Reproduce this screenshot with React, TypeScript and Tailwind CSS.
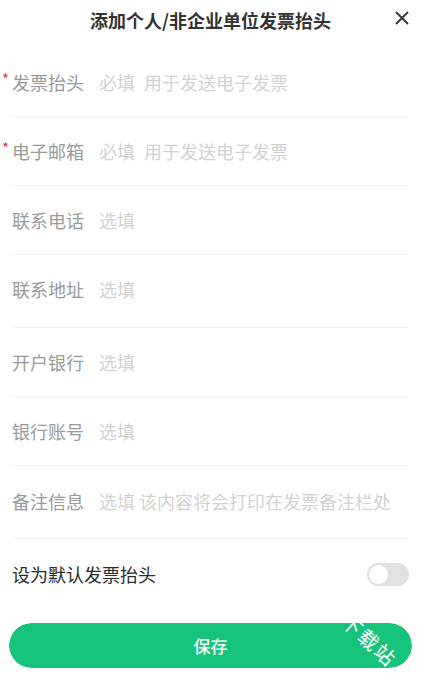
import React from 'react';

const fields = [
    { label: '发票抬头', placeholder: '必填\u2002用于发送电子发票', required: true },
    { label: '电子邮箱', placeholder: '必填\u2002用于发送电子发票', required: true },
    { label: '联系电话', placeholder: '选填' },
    { label: '联系地址', placeholder: '选填', tall: true },
    { label: '开户银行', placeholder: '选填' },
    { label: '银行账号', placeholder: '选填' },
];

function Row({ label, placeholder, required, tall }: { label: string; placeholder: string; required?: boolean; tall?: boolean }) {
    return (
        <div className={`${tall ? 'h-[73px] pb-[4px]' : 'h-[69px]'} flex items-center border-b border-[#f1f1f1]`}>
            <div className="relative w-[87px] shrink-0 text-[18px] leading-[26px] text-[#9a9a9a]">
                {required && (
                    <span className="absolute -left-[10px] -top-[3px] text-[15px] text-[#f5323c]">*</span>
                )}
                {label}
            </div>
            <div className="text-[18px] leading-[26px] text-[#d2d2d2] whitespace-nowrap">{placeholder}</div>
        </div>
    );
}

export default function App() {
    return (
        <div
            className="w-[421px] h-[680px] bg-white px-3 overflow-hidden"
            style={{ fontFamily: '"Noto Sans CJK SC", "Noto Sans", sans-serif' }}
        >
            {/* Header */}
            <div className="relative h-[40px] flex items-center justify-center">
                <h1 className="text-[18px] font-bold text-[#333]">添加个人/非企业单位发票抬头</h1>
                <svg
                    className="absolute right-[0px] top-[11px]"
                    width="14"
                    height="14"
                    viewBox="0 0 14 14"
                    fill="none"
                    stroke="#3a3a3a"
                    strokeWidth="2"
                >
                    <path d="M1 1 L13 13 M13 1 L1 13" />
                </svg>
            </div>

            {/* Form */}
            <div className="mt-2">
                {fields.map((f) => (
                    <Row key={f.label} {...f} />
                ))}
                <div className="h-[73px] flex items-start pt-[22px] border-b border-[#f1f1f1]">
                    <div className="w-[87px] shrink-0 text-[18px] leading-[26px] text-[#9a9a9a]">备注信息</div>
                    <div className="text-[18px] leading-[26px] text-[#d2d2d2] whitespace-nowrap">
                        选填 该内容将会打印在发票备注栏处
                    </div>
                </div>
                <div className="h-[70px] flex items-center justify-between">
                    <span className="text-[18px] leading-[26px] text-[#2b2b2b]">设为默认发票抬头</span>
                    <div className="w-[42px] h-[23px] rounded-full bg-[#e1e1e1] p-[2px] flex items-center">
                        <div className="w-[19px] h-[19px] rounded-full bg-white" />
                    </div>
                </div>
            </div>

            {/* Save button */}
            <div className="relative mt-[14px] -mx-[3px] overflow-hidden rounded-full">
                <button className="block w-full h-[45px] rounded-full bg-[#16c37a] text-white text-[17px] font-medium">
                    保存
                </button>
                {/* watermark */}
                <div className="absolute left-[336px] top-[-15px] rotate-[42deg] origin-left text-white text-[20px] leading-none tracking-[2px] pointer-events-none whitespace-nowrap">
                    下载站
                </div>
            </div>
        </div>
    );
}
